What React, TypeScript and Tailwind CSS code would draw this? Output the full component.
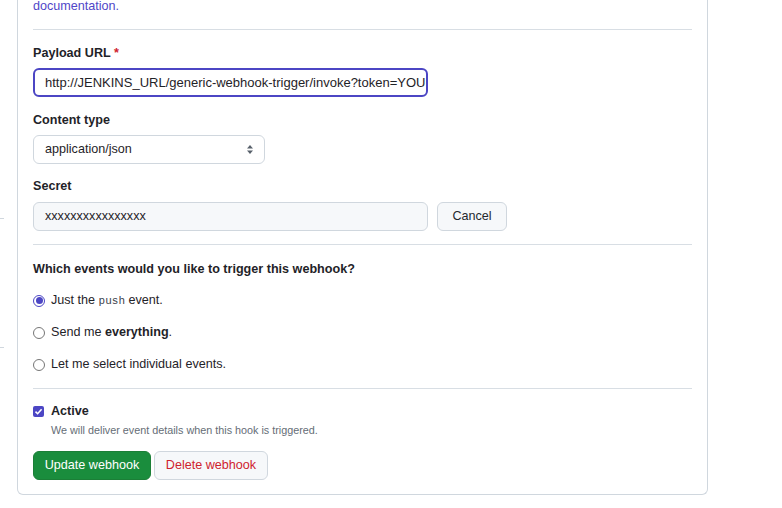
export default function App() {
  return (
    <div className="relative h-[508px] w-[782px] overflow-hidden bg-white font-['Liberation_Sans',Arial,sans-serif] text-[12.6px] text-[#1f2328]">
      {/* bits of the sidebar poking in on the left */}
      <div className="absolute left-0 top-[218px] h-px w-[4px] bg-[#d0d7de]" />
      <div className="absolute left-0 top-[347px] h-px w-[4px] bg-[#d0d7de]" />

      <div className="ml-[17px] w-[691px] rounded-b-md border border-t-0 border-[#d0d7de] px-[15px] pb-[14px]">
        <p className="-mt-[4px] leading-[21px] text-[#5046c8]">documentation.</p>

        <div className="mt-[12px] h-px bg-[#d8dee4]" />

        <label className="mt-[13px] block font-bold leading-[21px]">
          Payload URL <span className="text-[#cf222e]">*</span>
        </label>
        <div className="mt-[4px] flex h-[29px] w-[395px] items-center overflow-hidden whitespace-nowrap rounded-md border-2 border-[#4c46c4] px-[10px] text-[13px]">
          http://JENKINS_URL/generic-webhook-trigger/invoke?token=YOUR_TOKEN
        </div>

        <label className="mt-[13px] block font-bold leading-[21px]">Content type</label>
        <div className="mt-[4px] flex h-[29px] w-[232px] items-center justify-between rounded-md border border-[#d0d7de] pl-[11px] pr-[10px]">
          <span>application/json</span>
          <svg width="8" height="11" viewBox="0 0 8 11" fill="#57606a">
            <path d="M4 1 L7 4.5 H1 Z" />
            <path d="M4 10 L7 6.5 H1 Z" />
          </svg>
        </div>

        <label className="mt-[12px] block font-bold leading-[21px]">Secret</label>
        <div className="mt-[5px] flex gap-[9px]">
          <div className="flex h-[29px] w-[395px] items-center rounded-md border border-[#d0d7de] bg-[#f6f8fa] px-[11px]">
            xxxxxxxxxxxxxxxx
          </div>
          <button className="h-[29px] w-[70px] rounded-md border border-[#d0d7de] bg-[#f6f8fa] text-[#24292f]">
            Cancel
          </button>
        </div>

        <div className="mt-[13px] h-px bg-[#d8dee4]" />

        <p className="mt-[14px] font-bold leading-[21px]">Which events would you like to trigger this webhook?</p>

        <div className="mt-[10px] flex flex-col gap-[11px]">
          <div className="flex h-[21px] items-center gap-[6px]">
            <span className="flex h-[12px] w-[12px] items-center justify-center rounded-full border border-[#4c46c4]">
              <span className="h-[7px] w-[7px] rounded-full bg-[#4c46c4]" />
            </span>
            <span>
              Just the <code className="font-['Liberation_Mono',monospace] text-[11px] text-[#3d444d]">push</code> event.
            </span>
          </div>
          <div className="flex h-[21px] items-center gap-[6px]">
            <span className="h-[12px] w-[12px] rounded-full border border-[#767676]" />
            <span>
              Send me <b>everything</b>.
            </span>
          </div>
          <div className="flex h-[21px] items-center gap-[6px]">
            <span className="h-[12px] w-[12px] rounded-full border border-[#767676]" />
            <span>Let me select individual events.</span>
          </div>
        </div>

        <div className="mt-[13px] h-px bg-[#d8dee4]" />

        <div className="mt-[12px] flex h-[21px] items-center gap-[7px]">
          <span className="flex h-[11px] w-[11px] items-center justify-center rounded-[2px] bg-[#4c46c4]">
            <svg width="9" height="9" viewBox="0 0 9 9" fill="none" stroke="white" strokeWidth="1.6">
              <path d="M1.5 4.6 L3.6 6.7 L7.6 2.2" />
            </svg>
          </span>
          <span className="font-bold">Active</span>
        </div>
        <p className="ml-[18px] text-[10.8px] leading-[16px] text-[#656d76]">We will deliver event details when this hook is triggered.</p>

        <div className="mt-[13px] flex gap-[3px]">
          <button className="h-[29px] w-[118px] rounded-md border border-[#1b7f37] bg-[#1a8d3d] text-white">
            Update webhook
          </button>
          <button className="h-[29px] w-[114px] rounded-md border border-[#d0d7de] bg-[#f6f8fa] text-[#cf222e]">
            Delete webhook
          </button>
        </div>
      </div>
    </div>
  );
}
